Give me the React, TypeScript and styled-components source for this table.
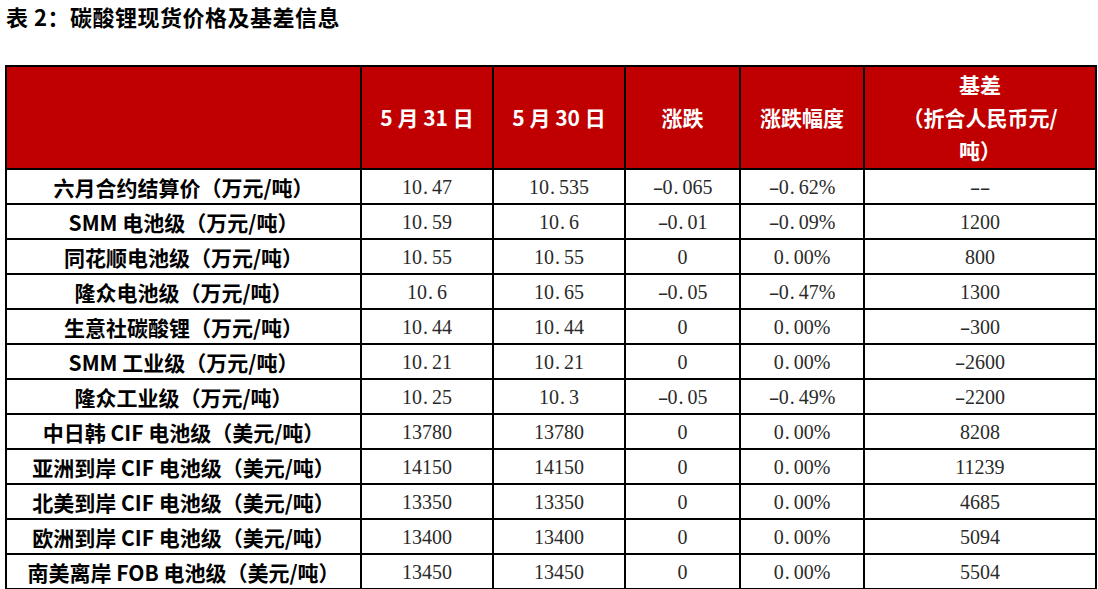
import React from "react";
import styled, { createGlobalStyle } from "styled-components";

const Global = createGlobalStyle`
  html, body { margin: 0; padding: 0; background: #ffffff; }
  body { font-family: "Noto Sans CJK SC", "Noto Sans", sans-serif; }
`;

const Page = styled.div`
  width: 1098px;
  height: 589px;
  overflow: hidden;
  background: #fff;
`;

const Title = styled.h1`
  margin: 0;
  padding: 2px 0 0 6px;
  height: 65px;
  box-sizing: border-box;
  font-family: "Noto Sans CJK SC", sans-serif;
  font-weight: 700;
  font-size: 22px;
  line-height: 28px;
  color: #000;
  letter-spacing: 0.5px;
`;

const Table = styled.table`
  margin-left: 5px;
  width: 1090px;
  border-collapse: collapse;
  table-layout: fixed;
  border: 2px solid #000;
`;

const HeadRow = styled.tr`
  height: 103px;
`;

const BodyRow = styled.tr`
  height: 35px;
`;

const HeadCell = styled.th`
  background: #c00000;
  color: #fff;
  border: 2px solid #000;
  padding: 0;
  text-align: center;
  vertical-align: middle;
  font-family: "Noto Sans CJK SC", sans-serif;
  font-weight: 700;
  font-size: 21px;
  line-height: 33px;
`;

const LabelCell = styled.td`
  border: 2px solid #000;
  padding: 0;
  text-align: center;
  vertical-align: middle;
  font-family: "Noto Sans CJK SC", sans-serif;
  font-weight: 700;
  font-size: 21px;
  line-height: 30px;
  color: #000;
  white-space: nowrap;
`;

const NumCell = styled.td`
  border: 2px solid #000;
  padding: 0;
  text-align: center;
  vertical-align: middle;
  font-family: "Liberation Serif", "Noto Sans CJK SC", serif;
  font-size: 20px;
  line-height: 30px;
  color: #2a2a2a;
  white-space: nowrap;
`;

const Dot = styled.span`
  display: inline-block;
  width: 0.5em;
  padding-left: 1px;
  box-sizing: border-box;
  text-align: left;
`;

const Minus = styled.span`
  display: inline-block;
  width: 0.5em;
  text-align: center;
  transform: scaleX(1.6);
`;

function Num({ value }: { value: string }) {
  const parts: React.ReactNode[] = [];
  let buf = "";
  const flush = (k: number) => {
    if (buf) {
      parts.push(<React.Fragment key={"t" + k}>{buf}</React.Fragment>);
      buf = "";
    }
  };
  Array.from(value).forEach((ch, i) => {
    if (ch === ".") {
      flush(i);
      parts.push(<Dot key={"d" + i}>.</Dot>);
    } else if (ch === "-") {
      flush(i);
      parts.push(<Minus key={"m" + i}>-</Minus>);
    } else {
      buf += ch;
    }
  });
  flush(value.length);
  return <>{parts}</>;
}

const widths = [355, 132, 132, 115, 124, 232];

type Row = [string, string, string, string, string, string];

const rows: Row[] = [
  ["六月合约结算价（万元/吨）", "10.47", "10.535", "-0.065", "-0.62%", "--"],
  ["SMM 电池级（万元/吨）", "10.59", "10.6", "-0.01", "-0.09%", "1200"],
  ["同花顺电池级（万元/吨）", "10.55", "10.55", "0", "0.00%", "800"],
  ["隆众电池级（万元/吨）", "10.6", "10.65", "-0.05", "-0.47%", "1300"],
  ["生意社碳酸锂（万元/吨）", "10.44", "10.44", "0", "0.00%", "-300"],
  ["SMM 工业级（万元/吨）", "10.21", "10.21", "0", "0.00%", "-2600"],
  ["隆众工业级（万元/吨）", "10.25", "10.3", "-0.05", "-0.49%", "-2200"],
  ["中日韩 CIF 电池级（美元/吨）", "13780", "13780", "0", "0.00%", "8208"],
  ["亚洲到岸 CIF 电池级（美元/吨）", "14150", "14150", "0", "0.00%", "11239"],
  ["北美到岸 CIF 电池级（美元/吨）", "13350", "13350", "0", "0.00%", "4685"],
  ["欧洲到岸 CIF 电池级（美元/吨）", "13400", "13400", "0", "0.00%", "5094"],
  ["南美离岸 FOB 电池级（美元/吨）", "13450", "13450", "0", "0.00%", "5504"],
];

export default function App() {
  return (
    <Page>
      <Global />
      <Title>表 2：碳酸锂现货价格及基差信息</Title>
      <Table>
        <colgroup>
          {widths.map((w, i) => (
            <col key={i} style={{ width: w }} />
          ))}
        </colgroup>
        <thead>
          <HeadRow>
            <HeadCell />
            <HeadCell>5 月 31 日</HeadCell>
            <HeadCell>5 月 30 日</HeadCell>
            <HeadCell>涨跌</HeadCell>
            <HeadCell>涨跌幅度</HeadCell>
            <HeadCell>
              基差
              <br />
              （折合人民币元/
              <br />
              吨）
            </HeadCell>
          </HeadRow>
        </thead>
        <tbody>
          {rows.map((r) => (
            <BodyRow key={r[0]}>
              <LabelCell>{r[0]}</LabelCell>
              {r.slice(1).map((v, i) => (
                <NumCell key={i}>
                  <Num value={v} />
                </NumCell>
              ))}
            </BodyRow>
          ))}
        </tbody>
      </Table>
    </Page>
  );
}
